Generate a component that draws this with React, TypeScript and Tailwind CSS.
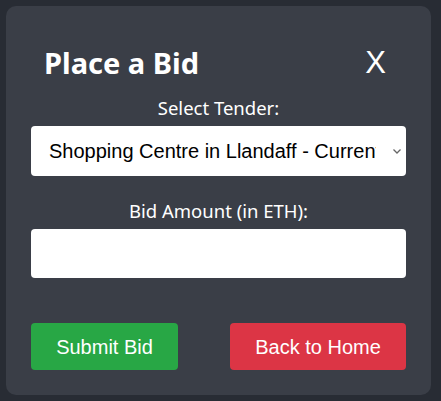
import React from "react";

function App() {
  return (
    <div className="h-screen w-full bg-[#282c34] pt-[6px] pl-[6px] pr-[10px] pb-[6px] font-['Noto_Sans',sans-serif]">
      <div className="h-[389px] rounded-[10px] bg-[#3a3e47] px-[25px] text-white">
        <div className="flex items-center justify-between pt-[40px] pl-[13px] pr-[20px]">
          <h2 className="text-[29px] font-bold leading-[34px]">Place a Bid</h2>
          <button className="font-['Liberation_Sans',sans-serif] text-[31px] leading-[34px]">X</button>
        </div>
        <form className="flex flex-col">
          <label className="mt-[16px] text-center text-[18.5px] leading-[24px]">Select Tender:</label>
          <div className="relative mt-[6px]">
            <select className="h-[50px] w-full appearance-none rounded-[4px] bg-white pl-[18px] pr-[30px] font-['Liberation_Sans',sans-serif] text-[20px] text-black outline-none">
              <option>Shopping Centre in Llandaff - Current Bid: 0 ETH</option>
            </select>
            <svg className="pointer-events-none absolute right-[4px] top-[21px]" width="10" height="8" viewBox="0 0 10 8">
              <path d="M1.5 2.5 L5 6 L8.5 2.5" fill="none" stroke="#666" strokeWidth="1.3" />
            </svg>
          </div>
          <label className="mt-[23px] text-center text-[18.5px] leading-[24px]">Bid Amount (in ETH):</label>
          <input type="text" className="mt-[6px] h-[49px] w-full rounded-[4px] bg-white px-[18px] font-['Liberation_Sans',sans-serif] text-[20px] text-black outline-none" />
          <div className="mt-[45px] flex justify-between">
            <button type="button" className="h-[47px] w-[147px] rounded-[4px] bg-[#28a745] font-['Liberation_Sans',sans-serif] text-[20px] text-white">Submit Bid</button>
            <button type="button" className="h-[47px] w-[176px] rounded-[4px] bg-[#dc3545] font-['Liberation_Sans',sans-serif] text-[20px] text-white">Back to Home</button>
          </div>
        </form>
      </div>
    </div>
  );
}

export default App;
